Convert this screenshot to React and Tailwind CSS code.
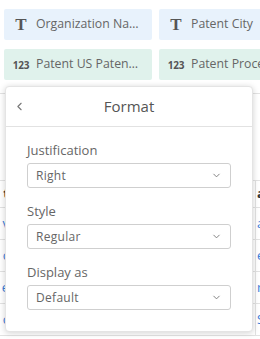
import { ChevronDown, ChevronLeft } from "lucide-react";

const chips = [
  [
    { kind: "text", label: "Organization Name" },
    { kind: "text", label: "Patent City" },
  ],
  [
    { kind: "num", label: "Patent US Patent Number" },
    { kind: "num", label: "Patent Processing Time" },
  ],
];

const rows = [
  { left: "t", right: "a", head: true },
  { left: "v", right: "al" },
  { left: "c", right: "er" },
  { left: "e", right: "re" },
  { left: "c", right: "Sal" },
];

const fields = [
  { label: "Justification", value: "Right" },
  { label: "Style", value: "Regular" },
  { label: "Display as", value: "Default" },
];

const Chip = ({ kind, label }) => (
  <div
    className={`h-[31px] w-[148px] shrink-0 rounded-[2px] flex items-center ${
      kind === "text" ? "bg-[#e8f2fc]" : "bg-[#e0f2ec]"
    }`}
  >
    <span className="w-[32px] shrink-0 pl-[2px] flex justify-center text-[#555]">
      {kind === "text" ? (
        <span className="font-['Liberation_Serif',serif] font-bold text-[17px] leading-none">T</span>
      ) : (
        <span className="font-bold text-[10px] leading-none tracking-[-0.2px]">123</span>
      )}
    </span>
    <span className="truncate pr-[12px] text-[12.3px] text-[#666]">{label}</span>
  </div>
);

const App = () => {
  return (
    <div className="relative w-[260px] h-[339px] overflow-hidden bg-white font-['Open_Sans',sans-serif]">
      {/* field chips */}
      <div className="pt-[9px] pl-[4px] flex flex-col gap-[9px]">
        {chips.map((row, i) => (
          <div key={i} className="flex gap-[7px]">
            {row.map((c) => (
              <Chip key={c.label} {...c} />
            ))}
          </div>
        ))}
      </div>

      <div className="mt-[13px] border-t border-[#e2e2e2]" />

      {/* table behind the popup */}
      <div className="mt-[86px] border-t border-[#e2e2e2]">
        {rows.map((r, i) => (
          <div
            key={i}
            className={`flex border-b border-[#e2e2e2] text-[13px] ${r.head ? "h-[27px]" : "h-[32px]"}`}
          >
            <div
              className={`w-[9px] flex items-center justify-end overflow-hidden ${
                r.head ? "font-bold text-[#333]" : "text-[#3b7dd8]"
              }`}
            >
              {r.left}
            </div>
            <div className="flex-1" />
            <div
              className={`w-[5px] border-l border-[#e2e2e2] pl-[1px] flex items-center overflow-hidden ${
                r.head ? "font-bold text-[#333]" : "text-[#3b7dd8]"
              }`}
            >
              {r.right}
            </div>
          </div>
        ))}
      </div>

      {/* format popup */}
      <div className="absolute left-[5px] top-[86px] w-[248px] h-[246px] bg-white rounded-[4px] border border-[#e4e4e4] shadow-[0_1px_6px_rgba(0,0,0,0.18)]">
        <div className="relative h-[40px] flex items-center justify-center border-b border-[#e2e2e2]">
          <ChevronLeft className="absolute left-[7px] w-[13px] h-[13px] text-[#777]" strokeWidth={2} />
          <span className="text-[15px] text-[#555]">Format</span>
        </div>
        <div className="px-[21px] pt-[14px] flex flex-col">
          {fields.map((f, i) => (
            <div key={f.label} className={i > 0 ? "mt-[14px]" : ""}>
              <div className="text-[13px] leading-[18px] text-[#666]">{f.label}</div>
              <div className="mt-[4px] h-[25px] w-[204px] rounded-[3px] border border-[#cfcfcf] flex items-center justify-between pl-[8px] pr-[8px]">
                <span className="text-[12px] tracking-[0.3px] text-[#666]">{f.value}</span>
                <ChevronDown className="w-[11px] h-[11px] text-[#777]" strokeWidth={2} />
              </div>
            </div>
          ))}
        </div>
      </div>
    </div>
  );
};

export default App;
